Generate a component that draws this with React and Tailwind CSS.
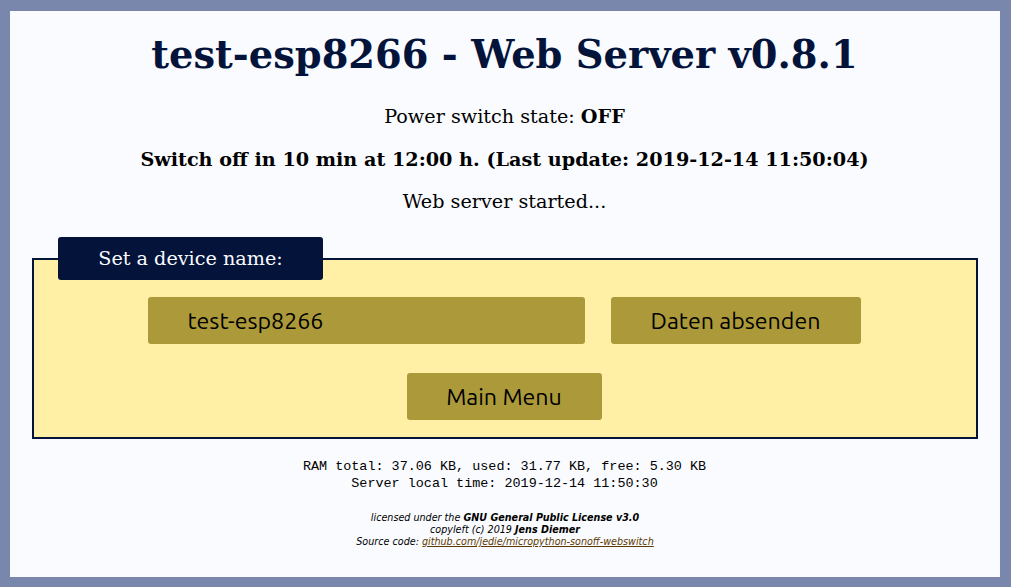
export default function App() {
  return (
    <div className="h-[587px] bg-[#7a87ad] pt-[11px] pr-[11px] pb-[10px] pl-[10px] overflow-hidden">
      <div className="h-[566px] bg-[#f9fbff] px-[22px] text-center text-[19.2px] leading-[26px] text-black font-['DejaVu_Serif',serif]">
        <div className="pr-[1px]">
          <h1 className="pt-[18px] text-[38.4px] leading-[52px] font-bold text-[#03133a]">test-esp8266 - Web Server v0.8.1</h1>
          <p className="mt-[23px]">Power switch state: <strong>OFF</strong></p>
          <p className="mt-[17px] font-bold">Switch off in 10 min at 12:00 h. (Last update: 2019-12-14 11:50:04)</p>
          <p className="mt-[16px]">Web server started...</p>
        </div>
        <div className="mt-[43px] relative h-[181px] border-2 border-[#03133a] bg-[#fff0a5]">
          <div className="absolute left-[24px] top-[-23px] flex h-[43px] w-[265px] items-center justify-center rounded-[3px] bg-[#03133a] text-[#f9fbff]">Set a device name:</div>
          <div className="flex justify-center gap-[26px] pt-[37px] pr-[2px] font-['Ubuntu','Noto_Sans',sans-serif] text-[23.2px]">
            <div className="flex h-[47px] w-[437px] items-center rounded-[3px] bg-[#ac9a3a] pl-[40px] pb-[2px] text-left">test-esp8266</div>
            <div className="flex h-[47px] w-[250px] items-center justify-center rounded-[3px] bg-[#ac9a3a] pb-[2px]">Daten absenden</div>
          </div>
          <div className="flex justify-center pt-[29px] pr-[2px] font-['Ubuntu','Noto_Sans',sans-serif] text-[23.2px]">
            <div className="flex h-[47px] w-[195px] items-center justify-center rounded-[3px] bg-[#ac9a3a] pb-[2px]">Main Menu</div>
          </div>
        </div>
        <div className="mt-[19px] pr-[1px] font-['Liberation_Mono',monospace] text-[13.44px] leading-[17px]">
          <div>RAM total: 37.06 KB, used: 31.77 KB, free: 5.30 KB</div>
          <div>Server local time: 2019-12-14 11:50:30</div>
        </div>
        <div className="mt-[20px] font-['DejaVu_Sans',sans-serif] text-[9.6px] leading-[12px] italic">
          <div>licensed under the <strong>GNU General Public License v3.0</strong></div>
          <div>copyleft (c) 2019 <strong>Jens Diemer</strong></div>
          <div>Source code: <a className="underline text-[#5c3a00]" href="#">github.com/jedie/micropython-sonoff-webswitch</a></div>
        </div>
      </div>
    </div>
  );
}
